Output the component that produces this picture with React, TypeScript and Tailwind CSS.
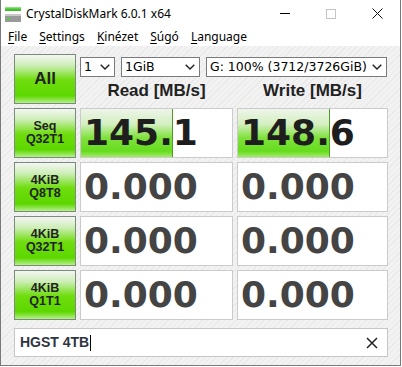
const stripes =
  "bg-[repeating-linear-gradient(-45deg,#f2f2f2_0px,#f2f2f2_3px,#e9e9e9_3px,#e9e9e9_4px)]";

const btnCls =
  "flex flex-col items-center justify-center border border-[#7b8b7b] bg-[linear-gradient(to_bottom,#f4f6f4_0%,#cdeeb6_22%,#6fdd0e_52%,#5dd700_85%,#b6f08a_100%)] text-[#222] font-bold [font-family:'Liberation_Sans',Arial,sans-serif]";

const TestButton = ({ l1, l2 }: { l1: string; l2: string }) => (
  <div className={`${btnCls} h-[50px] text-[12.5px] leading-[13px]`}>
    <span>{l1}</span>
    <span>{l2}</span>
  </div>
);

const Cell = ({ value, fill }: { value: string; fill: number }) => (
  <div className="relative h-[50px] border border-[#cbcbcb] bg-white overflow-hidden">
    {fill > 0 && (
      <div
        className="absolute left-0 top-0 bottom-0 border-r border-[#4f9a2a] bg-[linear-gradient(to_bottom,#eef5ea_0%,#d3efc0_32%,#7fe23c_60%,#66dc1e_88%,#a4ea6a_100%)]"
        style={{ width: `${fill}%` }}
      />
    )}
    <div
      className={`relative flex h-full items-center pl-[3px] text-[36px] font-bold leading-none [font-family:'DejaVu_Sans',Verdana,sans-serif] ${
        fill > 0 ? "text-[#1e1e1e]" : "text-[#444]"
      }`}
    >
      {value}
    </div>
  </div>
);

const Chevron = () => (
  <svg width="10" height="6" viewBox="0 0 10 6" className="shrink-0">
    <path d="M0.7 0.7 L5 5 L9.3 0.7" fill="none" stroke="#222" strokeWidth="1.4" />
  </svg>
);

const Select = ({ text, w }: { text: string; w: string }) => (
  <div
    className={`${w} flex h-[20px] items-center justify-between border border-[#7a7a7a] bg-white pl-[3px] pr-[4px] text-[12.5px] text-black [font-family:'DejaVu_Sans',Verdana,sans-serif]`}
  >
    <span>{text}</span>
    <Chevron />
  </div>
);

const Menu = ({ k, rest }: { k: string; rest: string }) => (
  <span>
    <span className="underline underline-offset-2">{k}</span>
    {rest}
  </span>
);

export default function App() {
  return (
    <div className="h-[367px] w-[402px] bg-white">
      <div className="flex h-[366px] w-[401px] flex-col border-x border-b border-[#7a7a7a] [font-family:'Noto_Sans',sans-serif]">
        {/* title bar */}
        <div className="flex h-[27px] items-center bg-white">
          <svg width="16" height="16" viewBox="0 0 16 16" className="ml-[4px]">
            <rect x="0" y="1" width="16" height="4" fill="#3fbf2a" />
            <rect x="0" y="1" width="16" height="1.5" fill="#8be07a" />
            <rect x="0" y="8" width="16" height="8" fill="#9a9a9a" />
            <rect x="0" y="8" width="16" height="2" fill="#c8c8c8" />
            <rect x="2" y="12" width="3" height="2" fill="#4fd03a" />
          </svg>
          <span className="ml-[5px] text-[12px] text-black">CrystalDiskMark 6.0.1 x64</span>
          <div className="ml-auto flex h-full">
            <div className="flex w-[46px] items-center justify-center">
              <div className="h-px w-[10px] bg-black" />
            </div>
            <div className="flex w-[46px] items-center justify-center">
              <div className="h-[10px] w-[10px] border border-[#c4c4c4]" />
            </div>
            <div className="flex w-[46px] items-center justify-center">
              <svg width="11" height="11" viewBox="0 0 11 11">
                <path d="M0.5 0.5 L10.5 10.5 M10.5 0.5 L0.5 10.5" stroke="#111" strokeWidth="1" />
              </svg>
            </div>
          </div>
        </div>
        {/* menu */}
        <div className="flex h-[19px] items-center gap-[12px] bg-white pl-[7px] text-[12px] text-black">
          <Menu k="F" rest="ile" />
          <Menu k="S" rest="ettings" />
          <Menu k="K" rest="inézet" />
          <Menu k="S" rest="úgó" />
          <Menu k="L" rest="anguage" />
        </div>
        {/* body */}
        <div className={`flex-1 ${stripes} pl-[13px] pr-[11px] pt-[8px]`}>
          <div className="grid grid-cols-[62px_153px_151px] gap-x-[4px] gap-y-[4px]">
            <div className={`${btnCls} h-[50px] text-[17px]`}>All</div>
            <div className="col-span-2 flex h-[50px] flex-col">
              <div className="mt-[3px] flex gap-[6px]">
                <Select text="1" w="w-[35px]" />
                <Select text="1GiB" w="w-[79px]" />
                <Select text="G: 100% (3712/3726GiB)" w="w-[181px]" />
              </div>
              <div className="mt-[4px] grid grid-cols-[153px_151px] gap-x-[4px] text-[17px] font-bold leading-[20px] text-[#222] [font-family:'Liberation_Sans',Arial,sans-serif]">
                <div className="text-center">Read [MB/s]</div>
                <div className="text-center">Write [MB/s]</div>
              </div>
            </div>

            <TestButton l1="Seq" l2="Q32T1" />
            <Cell value="145.1" fill={61} />
            <Cell value="148.6" fill={62} />

            <TestButton l1="4KiB" l2="Q8T8" />
            <Cell value="0.000" fill={0} />
            <Cell value="0.000" fill={0} />

            <TestButton l1="4KiB" l2="Q32T1" />
            <Cell value="0.000" fill={0} />
            <Cell value="0.000" fill={0} />

            <TestButton l1="4KiB" l2="Q1T1" />
            <Cell value="0.000" fill={0} />
            <Cell value="0.000" fill={0} />
          </div>
          <div className="mt-[8px] flex h-[29px] w-[374px] items-center border border-[#c6c6c6] bg-white pl-[5px] pr-[9px]">
            <span className="text-[14px] font-bold text-[#2f3540] [font-family:'Liberation_Sans',Arial,sans-serif]">
              HGST 4TB
            </span>
            <span className="ml-px h-[16px] w-px bg-black" />
            <svg width="12" height="12" viewBox="0 0 12 12" className="ml-auto">
              <path d="M1 1 L11 11 M11 1 L1 11" stroke="#222" strokeWidth="1.5" />
            </svg>
          </div>
        </div>
      </div>
    </div>
  );
}
